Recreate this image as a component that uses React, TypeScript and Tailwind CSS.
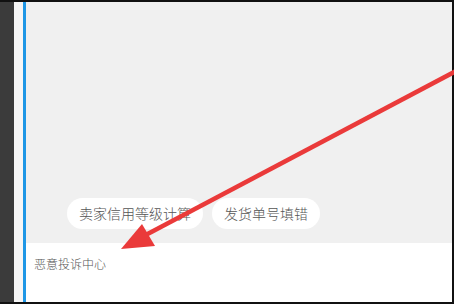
export default function App() {
  const chips = ['卖家信用等级计算', '发货单号填错'];
  return (
    <div
      className="relative w-[454px] h-[304px] bg-[#111] pt-[2px] pr-[2px] pb-[2px] overflow-hidden"
      style={{ fontFamily: '"Noto Sans CJK SC", "Noto Sans", sans-serif' }}
    >
      <div className="flex h-full">
        <div className="w-[14px] bg-[#3b3b3b]" />
        <div className="w-[9px] bg-[#f6f6f6]" />
        <div className="w-[3px] bg-[#1f97e6]" />
        <div className="flex-1 flex flex-col">
          {/* grey content area */}
          <div className="h-[241px] bg-[#f0f0f0] flex items-end gap-[9px] pl-[41px] pb-[14px]">
            {chips.map((c) => (
              <span
                key={c}
                className="h-[31px] px-[12px] rounded-full bg-white text-[14px] text-[#555] font-light flex items-center"
              >
                {c}
              </span>
            ))}
          </div>
          {/* bottom white area */}
          <div className="flex-1 bg-white pl-[8px] pt-[7px]">
            <span className="text-[12px] text-[#555] font-light">恶意投诉中心</span>
          </div>
        </div>
      </div>

      {/* annotation arrow */}
      <svg className="absolute inset-0 pointer-events-none" width="454" height="304" viewBox="0 0 454 304">
        <line x1="458" y1="70" x2="140" y2="238" stroke="#ea3a3a" strokeWidth="4.5" strokeLinecap="round" />
        <polygon points="121,249 142,224 155,246" fill="#ea3a3a" />
      </svg>
    </div>
  );
}
